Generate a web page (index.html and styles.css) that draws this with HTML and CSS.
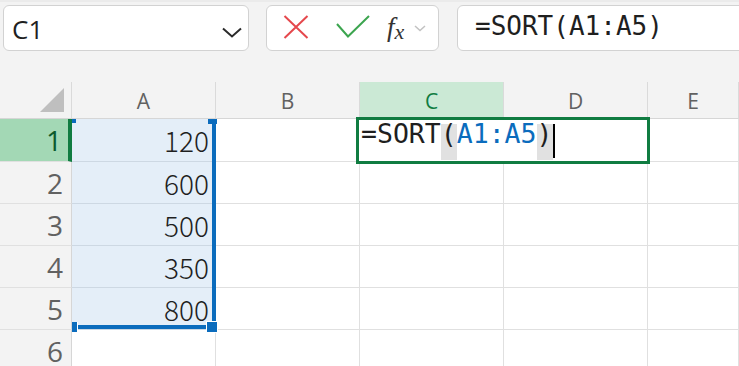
FILE: index.html
```html
<!doctype html>
<html>

<head>
    <title>Sheet</title>
    <link rel="stylesheet" href="styles.css">
</head>

<body>
    <div class="toolbar">
        <div class="namebox">
            <span class="ref">C1</span>
            <svg class="chev" width="20" height="11" viewBox="0 0 20 11">
                <path d="M1 1.5 L10 9.5 L19 1.5" fill="none" stroke="#2b2b2b" stroke-width="2" />
            </svg>
        </div>
        <div class="fxbox">
            <svg class="ico-x" width="26" height="24" viewBox="0 0 26 24">
                <path d="M1.5 1 L24.5 23 M24.5 1 L1.5 23" fill="none" stroke="#e5484d" stroke-width="2" />
            </svg>
            <svg class="ico-ok" width="34" height="24" viewBox="0 0 34 24">
                <path d="M1 9 L12 21.5 L33 1" fill="none" stroke="#3ca54f" stroke-width="2" />
            </svg>
            <span class="fx">f<span class="sub">x</span></span>
            <svg class="ico-more" width="12" height="7" viewBox="0 0 12 7">
                <path d="M1 1 L6 5.5 L11 1" fill="none" stroke="#c2c2c2" stroke-width="1.5" />
            </svg>
        </div>
        <div class="formula">=SORT(A1:A5)</div>
    </div>

    <section class="sheet">
        <div class="corner"><div class="tri"></div></div>
        <div class="ch">A</div>
        <div class="ch">B</div>
        <div class="ch ch-on">C</div>
        <div class="ch">D</div>
        <div class="ch">E</div>

        <div class="rh rh-on">1</div>
        <div class="c rng">120</div>
        <div class="c"></div>
        <div class="c"></div>
        <div class="c"></div>
        <div class="c"></div>

        <div class="rh">2</div>
        <div class="c rng">600</div>
        <div class="c"></div>
        <div class="c"></div>
        <div class="c"></div>
        <div class="c"></div>

        <div class="rh">3</div>
        <div class="c rng">500</div>
        <div class="c"></div>
        <div class="c"></div>
        <div class="c"></div>
        <div class="c"></div>

        <div class="rh">4</div>
        <div class="c rng">350</div>
        <div class="c"></div>
        <div class="c"></div>
        <div class="c"></div>
        <div class="c"></div>

        <div class="rh">5</div>
        <div class="c rng">800</div>
        <div class="c"></div>
        <div class="c"></div>
        <div class="c"></div>
        <div class="c"></div>

        <div class="rh">6</div>
        <div class="c"></div>
        <div class="c"></div>
        <div class="c"></div>
        <div class="c"></div>
        <div class="c"></div>

        <!-- referenced range A1:A5 -->
        <div class="range"></div>
        <div class="hd hd-tl"></div>
        <div class="hd hd-tr"></div>
        <div class="hd hd-bl"></div>
        <div class="hd hd-br"></div>

        <!-- cell being edited -->
        <div class="edit">
            <span>=SORT</span><span class="paren">(</span><span class="arg">A1:A5</span><span class="paren">)</span><span class="caret"></span>
        </div>
    </section>
</body>

</html>
```

FILE: styles.css
```css
body,
html {
    margin: 0;
    padding: 0;
    width: 739px;
    height: 366px;
    overflow: hidden;
    background: #fff;
}

* {
    box-sizing: border-box;
    font-family: "Open Sans", "Noto Sans", sans-serif;
}

.toolbar {
    height: 82px;
    background: #f3f3f3;
    border-top: 2px solid #ebebeb;
    display: flex;
    align-items: flex-start;
    padding: 3px 0 0 3px;
}

.namebox,
.fxbox,
.formula {
    height: 46px;
    background: #fff;
    border: 1px solid #d2d2d2;
    border-radius: 6px;
    flex-shrink: 0;
}

.namebox {
    width: 246px;
    display: flex;
    justify-content: space-between;
    align-items: flex-start;
    padding: 10px 6px 0 8px;
}

.namebox .ref {
    font-size: 26px;
    line-height: 1;
    color: #1f1f1f;
}

.chev {
    margin-top: 11px;
}

.fxbox {
    width: 173px;
    margin-left: 17px;
    display: flex;
    align-items: center;
    padding: 0 0 2px 16px;
}

.ico-ok {
    margin-left: 27px;
}

.fx {
    margin-left: 17px;
    font-family: "Liberation Serif", serif;
    font-style: italic;
    font-size: 27px;
    line-height: 1;
    color: #333;
}

.fx .sub {
    font-family: "Liberation Serif", serif;
    font-size: 22px;
    position: relative;
    top: 3px;
}

.ico-more {
    margin-left: 10px;
    margin-top: 2px;
}

.formula {
    width: 320px;
    margin-left: 18px;
    padding: 7px 0 0 17px;
    font-family: "DejaVu Sans Mono", monospace;
    font-size: 26px;
    line-height: 1;
    color: #1f1f1f;
}

/* grid */
.sheet {
    position: relative;
    display: grid;
    grid-template-columns: 72px repeat(4, 144px) 1fr;
    grid-template-rows: 37px 43px repeat(5, 42px);
}

.corner,
.ch,
.rh,
.c {
    border-right: 1px solid #e0e0e0;
    border-bottom: 1px solid #e0e0e0;
}

.corner,
.ch {
    background: #f3f3f3;
    border-right-color: #dadada;
    border-bottom-color: #d6d6d6;
}

.corner {
    display: flex;
    justify-content: flex-end;
    align-items: flex-end;
    padding: 0 7px 6px 0;
}

.tri {
    width: 24px;
    height: 24px;
    background: #bfbfbf;
    clip-path: polygon(100% 0, 100% 100%, 0 100%);
}

.ch {
    display: flex;
    justify-content: center;
    align-items: center;
    font-size: 21px;
    line-height: 1;
    color: #616161;
    padding-top: 2px;
}

.ch-on {
    background: #cbe9d5;
    color: #107c41;
}

.rh {
    background: #f3f3f3;
    border-right-color: #d6d6d6;
    display: flex;
    justify-content: flex-end;
    align-items: center;
    padding-right: 8px;
    font-size: 28px;
    line-height: 1;
    color: #616161;
}

.rh-on {
    background: #a3d8b5;
    border-right: 4px solid #107c41;
    color: #0c5a2c;
    padding-right: 6px;
}

.c {
    display: flex;
    justify-content: flex-end;
    align-items: center;
    padding-right: 6px;
    font-family: "Noto Sans CJK JP", "Noto Sans", sans-serif;
    font-weight: 300;
    font-size: 28px;
    line-height: 1;
    color: #1f1f1f;
}

.rng {
    background: #e4eef8;
    border-bottom-color: #cdd8e3;
}

.range {
    position: absolute;
    left: 72px;
    top: 37px;
    width: 144px;
    height: 210px;
    border-right: 4px solid #0b6cbd;
    border-bottom: 4px solid #0b6cbd;
}

.hd {
    position: absolute;
    background: #0b6cbd;
}

.hd-tl {
    left: 72px;
    top: 37px;
    width: 4px;
    height: 4px;
}

.hd-tr {
    left: 208px;
    top: 37px;
    width: 9px;
    height: 5px;
}

.hd-bl {
    left: 72px;
    top: 240px;
    width: 6px;
    height: 10px;
    border-right: 1px solid #fff;
}

.hd-br {
    left: 206px;
    top: 239px;
    width: 12px;
    height: 12px;
    border: 1px solid #fff;
}

.edit {
    position: absolute;
    left: 356px;
    top: 35px;
    width: 294px;
    height: 47px;
    border: 3px solid #107c41;
    background: #fff;
    padding: 4px 0 0 2px;
    display: flex;
    align-items: flex-start;
}

.edit span {
    display: inline-block;
    font-family: "DejaVu Sans Mono", monospace;
    font-size: 26.5px;
    line-height: 20px;
    padding-bottom: 16px;
    color: #1f1f1f;
    white-space: pre;
}

.edit .paren {
    background: #e1e1e1;
}

.edit .arg {
    color: #0b6cbd;
}

.edit .caret {
    width: 2px;
    height: 34px;
    padding: 0;
    background: #000;
}
```
